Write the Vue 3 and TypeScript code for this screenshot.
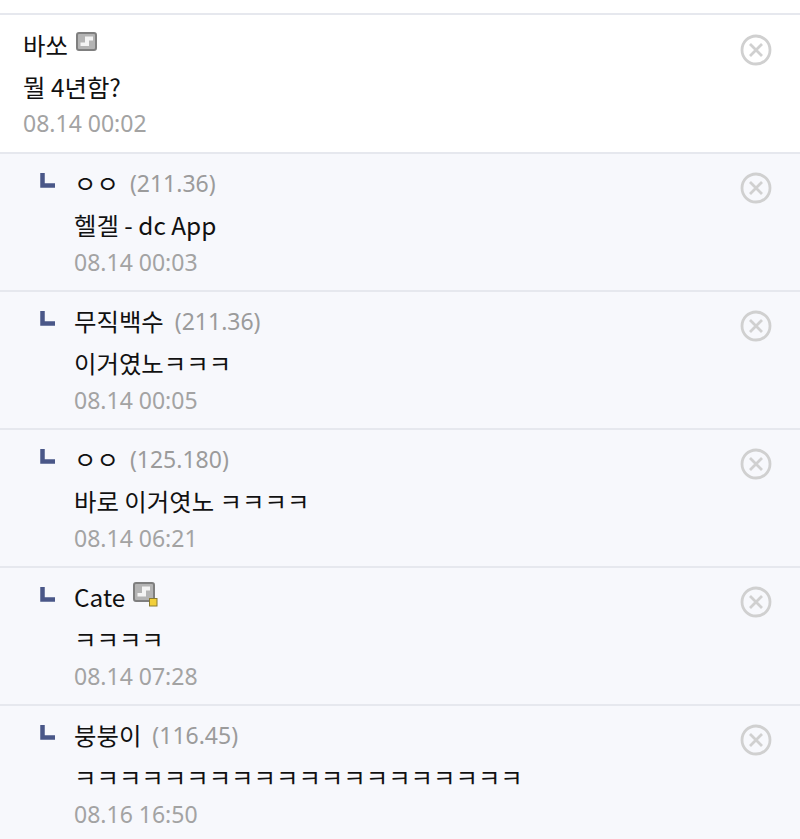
<script setup lang="ts">
interface Reply { name: string; ip?: string; text: string; date: string; badge?: boolean }
const replies: Reply[] = [
  { name: 'ㅇㅇ', ip: '(211.36)', text: '헬겔 - dc App', date: '08.14 00:03' },
  { name: '무직백수', ip: '(211.36)', text: '이거였노ㅋㅋㅋ', date: '08.14 00:05' },
  { name: 'ㅇㅇ', ip: '(125.180)', text: '바로 이거엿노 ㅋㅋㅋㅋ', date: '08.14 06:21' },
  { name: 'Cate', badge: true, text: 'ㅋㅋㅋㅋ', date: '08.14 07:28' },
  { name: '붕붕이', ip: '(116.45)', text: 'ㅋㅋㅋㅋㅋㅋㅋㅋㅋㅋㅋㅋㅋㅋㅋㅋㅋㅋㅋㅋ', date: '08.16 16:50' },
]
</script>

<template>
  <main class="list">
    <section class="row top">
      <div class="body">
        <div class="head">
          <span class="name">바쏘</span>
          <svg class="gall" width="21" height="20" viewBox="0 0 21 20">
            <rect x="1" y="1" width="19" height="17" rx="2" fill="#b4b4b4" stroke="#7f7f7f" stroke-width="2" />
            <path d="M9 4.500h8v4h-4v5.500H4.500v-3.500H9z" fill="#f4f4f4" />
          </svg>
        </div>
        <div class="text">뭘 4년함?</div>
        <div class="date">08.14 00:02</div>
      </div>
      <svg class="close" width="32" height="32" viewBox="0 0 32 32">
        <circle cx="16" cy="16" r="14" /><path d="M10 10l12 12M22 10L10 22" />
      </svg>
    </section>
    <section v-for="r in replies" :key="r.date" class="row reply">
      <svg class="arrow" width="15" height="15" viewBox="0 0 15 15">
        <path d="M2.500 0v12.500H15" fill="none" stroke="#4a5788" stroke-width="4.500" />
      </svg>
      <div class="body">
        <div class="head">
          <span class="name">{{ r.name }}</span>
          <span v-if="r.ip" class="ip">{{ r.ip }}</span>
          <svg v-if="r.badge" class="gall" width="25" height="25" viewBox="0 0 25 25">
            <rect x="1" y="1" width="20" height="18" rx="2" fill="#b4b4b4" stroke="#7f7f7f" stroke-width="2" />
            <path d="M9 4.500h8v4h-4v6H4.500v-3.500H9z" fill="#f4f4f4" />
            <rect x="16.500" y="16.500" width="7.500" height="7.500" fill="#f2cf3a" stroke="#8a7a30" />
          </svg>
        </div>
        <div class="text">{{ r.text }}</div>
        <div class="date">{{ r.date }}</div>
      </div>
      <svg class="close" width="32" height="32" viewBox="0 0 32 32">
        <circle cx="16" cy="16" r="14" /><path d="M10 10l12 12M22 10L10 22" />
      </svg>
    </section>
  </main>
</template>

<style>
html, body { margin: 0; background: #fff; }
</style>

<style scoped>
.list {
  width: 800px;
  height: 839px;
  overflow: hidden;
  padding-top: 13px;
  box-sizing: border-box;
  font-family: "Noto Sans CJK KR", "Noto Sans", sans-serif;
  color: #111;
}
.row {
  display: flex;
  box-sizing: border-box;
  border-top: 2px solid #e6e8ee;
  position: relative;
}
.top { height: 139px; padding: 10px 0 0 23px; background: #fff; }
.reply { height: 138px; padding: 9px 0 0 40px; background: #f7f8fc; }
.body { flex: 1; display: flex; flex-direction: column; }
.head { display: flex; align-items: center; height: 40px; gap: 8px; }
.name { font-size: 24.4px; line-height: 40px; }
.ip { font-size: 23px; color: #9b9b9b; margin-left: 3px; font-family: "Noto Sans", sans-serif; }
.gall { margin-top: -6px; }
.text { font-size: 24.4px; line-height: 40px; margin-top: 2px; }
.date { font-size: 23px; line-height: 34px; color: #a3a3a3; font-family: "Noto Sans", sans-serif; }
.top .date { margin-top: -1px; }
.arrow { margin: 10px 19px 0 0; flex: none; }
.close { position: absolute; right: 28px; top: 19px; fill: none; stroke: #d0d0d0; stroke-width: 2.800; }
.reply .close { top: 18px; }
</style>
